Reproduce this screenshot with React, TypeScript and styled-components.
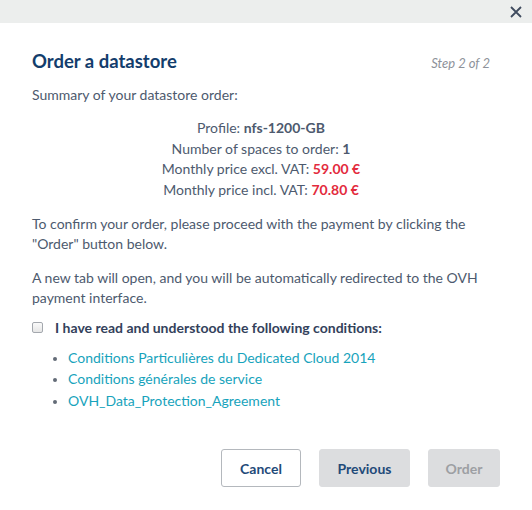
import React from 'react'
import styled, { createGlobalStyle } from 'styled-components'

const GlobalStyle = createGlobalStyle`
  html, body {
    margin: 0;
    padding: 0;
    background: #fff;
  }
  body {
    font-family: Lato, "Noto Sans", sans-serif;
    font-size: 14px;
    color: #4d5a6e;
  }
`

const Modal = styled.div`
  width: 532px;
  height: 510px;
  display: flex;
  flex-direction: column;
  background: #fff;
  overflow: hidden;
`

const TopBar = styled.div`
  height: 23px;
  background: #eceeed;
  display: flex;
  justify-content: flex-end;
  align-items: center;
  padding-right: 10px;
`

const CloseButton = styled.button`
  border: 0;
  background: transparent;
  padding: 0;
  width: 12px;
  height: 12px;
  display: flex;
  cursor: pointer;
`

const Body = styled.div`
  padding: 27px 42px 0 32px;
  display: flex;
  flex-direction: column;
`

const TitleRow = styled.div`
  display: flex;
  justify-content: space-between;
  align-items: baseline;
`

const Title = styled.h1`
  margin: 0;
  font-size: 18.5px;
  font-weight: 700;
  color: #133d6c;
  line-height: 22px;
`

const Step = styled.span`
  font-style: italic;
  font-size: 13px;
  color: #8d929a;
`

const Text = styled.p<{ $gap: number }>`
  margin: ${(p) => p.$gap}px 0 0;
  line-height: 20px;
`

const Summary = styled.div`
  margin: 13px 0 0;
  text-align: center;
  line-height: 20.7px;
`

const Strong = styled.b`
  font-weight: 700;
  color: #4d5a6e;
`

const Price = styled.b`
  font-weight: 700;
  color: #e32b3d;
`

const CheckRow = styled.label`
  display: flex;
  align-items: center;
  gap: 12px;
  margin-top: 10px;
  font-weight: 700;
  color: #33415b;
  line-height: 20px;
`

const Box = styled.span`
  width: 11px;
  height: 11px;
  border: 1px solid #a4a8ae;
  border-radius: 2px;
  background: linear-gradient(#fafafa, #e6e6e6);
  box-sizing: border-box;
`

const LinkList = styled.ul`
  margin: 9px 0 0;
  padding: 0 0 0 36px;
  list-style: disc;
  line-height: 21.5px;
  li::marker {
    color: #636b77;
    font-size: 12px;
  }
`

const Link = styled.a`
  color: #17a3bc;
  text-decoration: none;
`

const Footer = styled.div`
  display: flex;
  justify-content: flex-end;
  gap: 18px;
  padding: 0 32px 0 0;
  margin-top: 38px;
`

const Button = styled.button<{ $variant: 'outline' | 'grey' | 'disabled'; $width: number }>`
  width: ${(p) => p.$width}px;
  height: 38px;
  padding: 0;
  border-radius: 3px;
  font-family: Lato, "Noto Sans", sans-serif;
  font-size: 14px;
  font-weight: 700;
  cursor: pointer;
  border: 1px solid ${(p) => (p.$variant === 'outline' ? '#b4b8bd' : '#dcdddf')};
  background: ${(p) => (p.$variant === 'outline' ? '#fff' : '#dcdddf')};
  color: ${(p) => (p.$variant === 'disabled' ? '#9d9fa3' : '#1f4a79')};
`

export default function App() {
  return (
    <Modal>
      <GlobalStyle />
      <TopBar>
        <CloseButton aria-label="Close">
          <svg width="12" height="12" viewBox="0 0 12 12">
            <path d="M1 1L11 11M11 1L1 11" stroke="#3f4b5e" strokeWidth="1.8" />
          </svg>
        </CloseButton>
      </TopBar>
      <Body>
        <TitleRow>
          <Title>Order a datastore</Title>
          <Step>Step 2 of 2</Step>
        </TitleRow>
        <Text $gap={13}>Summary of your datastore order:</Text>
        <Summary>
          <div>
            Profile: <Strong>nfs-1200-GB</Strong>
          </div>
          <div>
            Number of spaces to order: <Strong>1</Strong>
          </div>
          <div>
            Monthly price excl. VAT: <Price>59.00 €</Price>
          </div>
          <div>
            Monthly price incl. VAT: <Price>70.80 €</Price>
          </div>
        </Summary>
        <Text $gap={13}>
          To confirm your order, please proceed with the payment by clicking the "Order" button below.
        </Text>
        <Text $gap={14}>
          A new tab will open, and you will be automatically redirected to the OVH payment interface.
        </Text>
        <CheckRow>
          <Box />
          I have read and understood the following conditions:
        </CheckRow>
        <LinkList>
          <li>
            <Link href="#">Conditions Particulières du Dedicated Cloud 2014</Link>
          </li>
          <li>
            <Link href="#">Conditions générales de service</Link>
          </li>
          <li>
            <Link href="#">OVH_Data_Protection_Agreement</Link>
          </li>
        </LinkList>
      </Body>
      <Footer>
        <Button $variant="outline" $width={80}>Cancel</Button>
        <Button $variant="grey" $width={91}>Previous</Button>
        <Button $variant="disabled" $width={72}>Order</Button>
      </Footer>
    </Modal>
  )
}
